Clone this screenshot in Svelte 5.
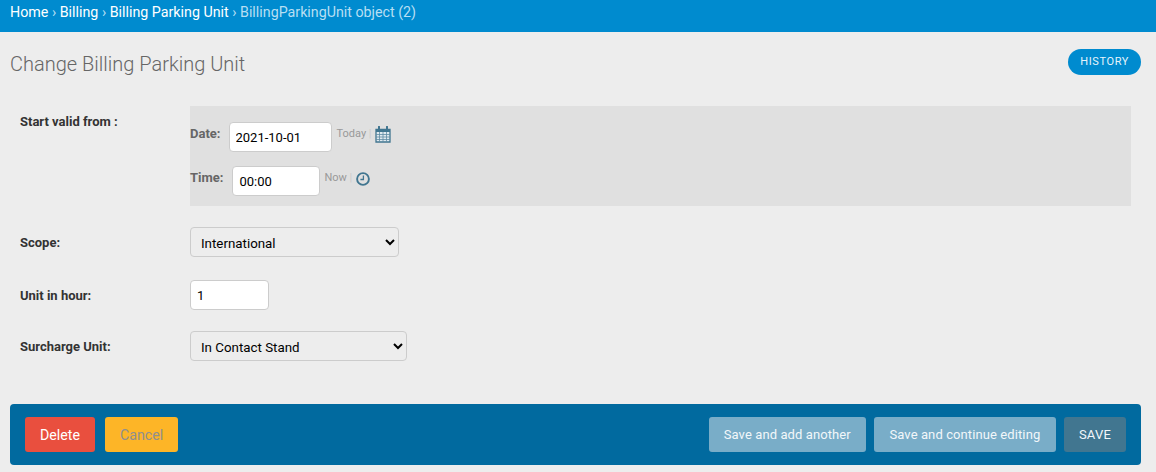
<script>
	let startDate = '2021-10-01';
	let startTime = '00:00';
	let unitInHour = '1';
	let crumbs = ['Home', 'Billing', 'Billing Parking Unit'];
</script>

<div class="page">
	<nav class="breadcrumbs">
		{#each crumbs as crumb}
			<a href="#top">{crumb}</a>{' › '}
		{/each}<span class="current">BillingParkingUnit object (2)</span>
	</nav>

	<div class="title-row">
		<h1>Change Billing Parking Unit</h1>
		<a class="history" href="#top">HISTORY</a>
	</div>

	<form>
		<div class="row datetime-row">
			<label class="label" for="date">Start valid from :</label>
			<div class="datetime">
				<div class="dt-line date-line">
					<span class="dt-label">Date:</span>
					<input id="date" class="date-input" type="text" bind:value={startDate} />
					<span class="shortcut">Today <i>|</i></span>
					<svg class="cal" width="16" height="17" viewBox="0 0 16 17" aria-hidden="true">
						<path d="M1 3.500h14v12.500H1z" fill="#dfe9ef" stroke="#417690" stroke-width="1.300" />
						<path d="M1 3h14v3H1z" fill="#417690" />
						<path d="M4 .8v3.400M12 .8v3.400" stroke="#417690" stroke-width="2" stroke-linecap="round" />
						<path d="M1 8.500h14M1 11h14M1 13.500h14M4.500 6v10M8 6v10M11.500 6v10" stroke="#5f8ca3" stroke-width=".8" />
					</svg>
				</div>
				<div class="dt-line time-line">
					<span class="dt-label">Time:</span>
					<input class="time-input" type="text" bind:value={startTime} />
					<span class="shortcut">Now <i>|</i></span>
					<svg class="clock" width="14" height="14" viewBox="0 0 14 14" aria-hidden="true">
						<circle cx="7" cy="7" r="5.900" fill="none" stroke="#417690" stroke-width="1.900" />
						<path d="M7.400 3.500v4H4.400" fill="none" stroke="#417690" stroke-width="1.300" />
					</svg>
				</div>
			</div>
		</div>

		<div class="row scope-row">
			<label class="label" for="scope">Scope:</label>
			<select id="scope" class="scope">
				<option>International</option>
				<option>Domestic</option>
			</select>
		</div>

		<div class="row unit-row">
			<label class="label" for="unit">Unit in hour:</label>
			<input id="unit" class="unit" type="text" bind:value={unitInHour} />
		</div>

		<div class="row surcharge-row">
			<label class="label" for="surcharge">Surcharge Unit:</label>
			<select id="surcharge" class="surcharge">
				<option>In Contact Stand</option>
				<option>Remote Stand</option>
			</select>
		</div>

		<footer class="submit-row">
			<div class="group">
				<button type="button" class="btn delete">Delete</button>
				<button type="button" class="btn cancel">Cancel</button>
			</div>
			<div class="group right">
				<button type="button" class="btn secondary">Save and add another</button>
				<button type="button" class="btn secondary continue">Save and continue editing</button>
				<button type="button" class="btn save">SAVE</button>
			</div>
		</footer>
	</form>
</div>

<style>
	:global(body) {
		background: #ededed;
	}

	.page {
		font-family: Roboto, "Liberation Sans", sans-serif;
		font-size: 13px;
		color: #333;
		height: 472px;
		overflow: hidden;
	}

	.breadcrumbs {
		height: 32px;
		box-sizing: border-box;
		padding: 3px 10px 0;
		background: #008bcf;
		color: #b8dff3;
		font-size: 14.25px;
		line-height: 18px;
	}

	.breadcrumbs a {
		color: #fff;
		text-decoration: none;
	}

	.title-row {
		display: flex;
		align-items: flex-start;
		justify-content: space-between;
		padding: 17px 15px 0 10px;
		height: 57px;
		box-sizing: border-box;
	}

	h1 {
		margin: 2px 0 0;
		font-size: 20px;
		font-weight: 300;
		line-height: 26px;
		color: #666;
	}

	.history {
		height: 26px;
		padding: 0 12px;
		border-radius: 13px;
		background: #008bcf;
		color: #e6f4fb;
		font-size: 11px;
		line-height: 26px;
		letter-spacing: .6px;
		text-decoration: none;
	}

	form {
		padding-top: 17px;
	}

	.row {
		display: flex;
		align-items: flex-start;
		padding-left: 20px;
	}

	.label {
		width: 170px;
		flex-shrink: 0;
		padding-top: 8px;
		font-weight: 700;
		font-size: 13px;
		line-height: 16px;
		color: #333;
	}

	.datetime {
		width: 941px;
		height: 100px;
		box-sizing: border-box;
		padding-top: 16px;
		background: #e0e0e0;
	}

	.dt-line {
		display: flex;
		align-items: flex-start;
		height: 30px;
	}

	.time-line {
		margin-top: 14px;
	}

	.dt-label {
		padding-top: 4px;
		font-weight: 700;
		font-size: 13px;
		line-height: 16px;
		color: #666;
	}

	input {
		box-sizing: border-box;
		height: 30px;
		padding: 0 6px;
		border: 1px solid #ccc;
		border-radius: 4px;
		background: #fff;
		color: #000;
		font-family: inherit;
		font-size: 13px;
		outline: none;
	}

	.date-input {
		width: 103px;
		margin-left: 8px;
	}

	.time-input {
		width: 88px;
		margin-left: 9px;
	}

	.shortcut {
		margin-left: 5px;
		padding-top: 5px;
		font-size: 11px;
		line-height: 14px;
		color: #999;
	}

	.time-line .shortcut {
		margin-left: 4px;
	}

	.shortcut i {
		font-style: normal;
		color: #ccc;
	}

	.cal {
		margin: 4px 0 0 3px;
	}

	.clock {
		margin: 6px 0 0 4px;
	}

	.scope-row {
		margin-top: 21px;
	}

	.unit-row {
		margin-top: 23px;
	}

	.surcharge-row {
		margin-top: 21px;
	}

	select {
		box-sizing: border-box;
		height: 30px;
		padding: 2px 6px 0;
		border: 1px solid #ccc;
		border-radius: 4px;
		background: #ededed;
		color: #000;
		font-family: inherit;
		font-size: 13.33px;
		outline: none;
	}

	.scope {
		width: 209px;
	}

	.surcharge {
		width: 217px;
	}

	.unit {
		width: 79px;
	}

	.submit-row {
		display: flex;
		justify-content: space-between;
		align-items: center;
		box-sizing: border-box;
		width: 1131px;
		height: 61px;
		margin: 43px 0 0 10px;
		padding: 0 15px;
		border-radius: 4px;
		background: #016a9f;
	}

	.group {
		display: flex;
		gap: 10px;
	}

	.group.right {
		gap: 8px;
	}

	.btn {
		height: 35px;
		padding: 0 15px;
		border: none;
		border-radius: 3px;
		font-family: inherit;
		font-size: 14.2px;
		color: #fff;
		cursor: pointer;
	}

	.delete {
		background: #e94f3e;
	}

	.cancel {
		background: #fdb527;
		color: #8f8f8f;
	}

	.secondary {
		background: #79adc8;
		font-size: 13px;
		color: #f2f7fa;
		letter-spacing: .1px;
	}

	.continue {
		min-width: 182px;
	}

	.save {
		background: #417690;
		font-size: 13px;
		color: #f2f7fa;
		letter-spacing: .2px;
	}
</style>
